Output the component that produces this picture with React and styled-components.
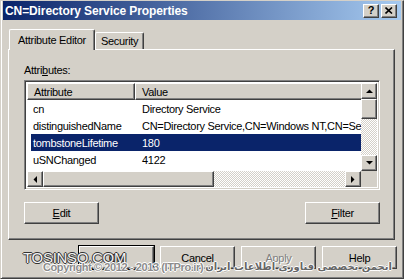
import React from 'react';
import styled, { createGlobalStyle, css } from 'styled-components';

const GlobalStyle = createGlobalStyle`
  html, body {
    margin: 0;
    padding: 0;
    background: #d4d0c8;
  }
  body {
    font-family: "Liberation Sans", Arial, sans-serif;
    font-size: 11px;
    letter-spacing: -0.3px;
    color: #000;
  }
  * {
    box-sizing: border-box;
  }
`;

const raised = css`
  border: 1px solid;
  border-color: #fff #404040 #404040 #fff;
  box-shadow: inset -1px -1px #808080;
  background: #d4d0c8;
`;

const dither = css`
  background-color: #fff;
  background-image: repeating-conic-gradient(#d4d0c8 0 25%, #fff 0 50%);
  background-size: 2px 2px;
`;

const Window = styled.div`
  position: relative;
  width: 404px;
  height: 279px;
  padding: 0 2px 2px 2px;
  background: #d4d0c8;
  border: 1px solid;
  border-color: #d4d0c8 #404040 #404040 #d4d0c8;
  box-shadow: inset 1px 0 #fff, inset -1px -1px #808080;
  display: flex;
  flex-direction: column;
  overflow: hidden;
`;

const TitleBar = styled.div`
  height: 19px;
  display: flex;
  align-items: center;
  padding: 0 4px 0 2px;
  background: linear-gradient(to right, #0a246a, #a6caf0);
`;

const Title = styled.div`
  flex: 1;
  color: #fff;
  font-weight: bold;
  font-size: 12px;
  letter-spacing: -0.1px;
`;

const TitleButton = styled.div`
  ${raised};
  width: 16px;
  height: 14px;
  margin-left: 2px;
  display: flex;
  align-items: center;
  justify-content: center;
  font-weight: bold;
  font-size: 11px;
  line-height: 1;
`;

const Body = styled.div`
  padding: 9px 6px 0 5px;
`;

const TabStrip = styled.div`
  display: flex;
  align-items: flex-end;
  padding-left: 1px;
  height: 20px;
  position: relative;
  z-index: 1;
`;

const Tab = styled.div`
  height: ${(p) => (p.$active ? 21 : 17)}px;
  margin-bottom: ${(p) => (p.$active ? -1 : 0)}px;
  padding: 0 ${(p) => (p.$active ? 8 : 5)}px;
  display: flex;
  align-items: center;
  background: #d4d0c8;
  border: 1px solid;
  border-bottom: none;
  border-color: #fff #404040 #404040 #fff;
  border-radius: 2px 2px 0 0;
  box-shadow: inset -1px 0 #808080;
  white-space: nowrap;
`;

const Panel = styled.div`
  ${raised};
  height: 191px;
  padding: 14px 14px 0 15px;
  display: flex;
  flex-direction: column;
`;

const Label = styled.div`
  height: 13px;
  line-height: 13px;
  margin-bottom: 3px;
`;

const Key = styled.span`
  text-decoration: underline;
`;

const ListBox = styled.div`
  height: 110px;
  border: 1px solid;
  border-color: #808080 #fff #fff #808080;
  box-shadow: inset 1px 1px #404040, inset -1px -1px #d4d0c8;
  padding: 2px;
  background: #fff;
  display: grid;
  grid-template-columns: 1fr 16px;
  grid-template-rows: 1fr 16px;
`;

const Viewport = styled.div`
  overflow: hidden;
  white-space: nowrap;
`;

const HeaderRow = styled.div`
  display: flex;
  height: 17px;
`;

const HeaderCell = styled.div`
  ${raised};
  flex: none;
  width: ${(p) => p.$width}px;
  padding-left: 6px;
  display: flex;
  align-items: center;
`;

const Row = styled.div`
  display: flex;
  align-items: center;
  height: 17px;
  margin-left: 4px;
  background: ${(p) => (p.$selected ? '#0a246a' : 'transparent')};
  color: ${(p) => (p.$selected ? '#fff' : '#000')};
`;

const NameCell = styled.div`
  flex: none;
  width: 104px;
  padding-left: 2px;
`;

const ValueCell = styled.div`
  flex: none;
  padding-left: 7px;
`;

const VScroll = styled.div`
  ${dither};
  display: flex;
  flex-direction: column;
`;

const HScroll = styled.div`
  ${dither};
  display: flex;
`;

const Track = styled.div`
  flex: 1;
`;

const ScrollButton = styled.div`
  ${raised};
  flex: none;
  width: 16px;
  height: 16px;
  display: flex;
  align-items: center;
  justify-content: center;
`;

const Thumb = styled.div`
  ${raised};
  flex: none;
  width: ${(p) => (p.$horizontal ? `${p.$length}px` : '16px')};
  height: ${(p) => (p.$horizontal ? '16px' : `${p.$length}px`)};
`;

const Corner = styled.div`
  background: #d4d0c8;
`;

const ButtonRow = styled.div`
  display: flex;
  justify-content: space-between;
  margin-top: 12px;
`;

const Button = styled.div`
  ${raised};
  width: 75px;
  height: ${(p) => p.$height || 23}px;
  display: flex;
  align-items: center;
  justify-content: center;
  color: ${(p) => (p.$disabled ? '#808080' : '#000')};
  text-shadow: ${(p) => (p.$disabled ? '1px 1px #fff' : 'none')};
  ${(p) =>
    p.$default &&
    css`
      outline: 1px solid #000;
      outline-offset: 0;
    `}
`;

const Footer = styled.div`
  display: flex;
  justify-content: flex-end;
  gap: 6px;
  padding: 6px 4px 0 0;
`;

const Watermark = styled.div`
  position: absolute;
  left: 22px;
  top: 249px;
  pointer-events: none;
`;

const Brand = styled.div`
  font-size: 15px;
  line-height: 15px;
  color: #f2f2f2;
  letter-spacing: -0.3px;
  text-shadow: 1px 0 #333, -1px 0 #333, 0 1px #333, 0 -1px #333;
`;

const Copyright = styled.div`
  margin: -4px 0 0 20px;
  display: flex;
  align-items: center;
  gap: 2px;
  font-size: 11px;
  font-weight: bold;
  line-height: 12px;
  letter-spacing: -0.4px;
  color: #8c8c8c;
  white-space: nowrap;
  text-shadow: 1px 0 #fff, -1px 0 #fff, 0 1px #fff, 0 -1px #fff;
`;

const Persian = styled.span`
  font-family: "DejaVu Sans", sans-serif;
  font-size: 10px;
  letter-spacing: 0;
  color: #666;
`;

const Arrow = ({ dir }) => {
  const shapes = {
    up: '0,4 7,4 3.5,0.5',
    down: '0,0 7,0 3.5,3.5',
    left: '4,0 4,7 0.5,3.5',
    right: '0,0 0,7 3.5,3.5',
  };
  const vertical = dir === 'up' || dir === 'down';
  return (
    <svg width={vertical ? 7 : 4} height={vertical ? 4 : 7} viewBox={vertical ? '0 0 7 4' : '0 0 4 7'}>
      <polygon points={shapes[dir]} fill="#000" />
    </svg>
  );
};

const attributes = [
  { name: 'cn', value: 'Directory Service' },
  { name: 'distinguishedName', value: 'CN=Directory Service,CN=Windows NT,CN=Services,CN=Configuration' },
  { name: 'tombstoneLifetime', value: '180', selected: true },
  { name: 'uSNChanged', value: '4122' },
  { name: 'uSNCreated', value: '4122' },
];

export default function App() {
  return (
    <>
      <GlobalStyle />
      <Window>
        <TitleBar>
          <Title>CN=Directory Service Properties</Title>
          <TitleButton>?</TitleButton>
          <TitleButton>
            <svg width="8" height="7" viewBox="0 0 8 7">
              <path d="M0.5 0.5 L7 6.5 M7 0.5 L0.5 6.5" stroke="#000" strokeWidth="1.6" />
            </svg>
          </TitleButton>
        </TitleBar>

        <Body>
          <TabStrip>
            <Tab $active>Attribute Editor</Tab>
            <Tab>Security</Tab>
          </TabStrip>
          <Panel>
            <Label>
              Attri<Key>b</Key>utes:
            </Label>
            <ListBox>
              <Viewport>
                <HeaderRow>
                  <HeaderCell $width={108}>Attribute</HeaderCell>
                  <HeaderCell $width={300}>Value</HeaderCell>
                </HeaderRow>
                {attributes.map((a) => (
                  <Row key={a.name} $selected={a.selected}>
                    <NameCell>{a.name}</NameCell>
                    <ValueCell>{a.value}</ValueCell>
                  </Row>
                ))}
              </Viewport>
              <VScroll>
                <ScrollButton>
                  <Arrow dir="up" />
                </ScrollButton>
                <Thumb $length={20} />
                <Track />
                <ScrollButton>
                  <Arrow dir="down" />
                </ScrollButton>
              </VScroll>
              <HScroll>
                <ScrollButton>
                  <Arrow dir="left" />
                </ScrollButton>
                <Thumb $horizontal $length={171} />
                <Track />
                <ScrollButton>
                  <Arrow dir="right" />
                </ScrollButton>
              </HScroll>
              <Corner />
            </ListBox>
            <ButtonRow>
              <Button $height={22}>
                <Key>E</Key>dit
              </Button>
              <Button $height={22}>
                <Key>F</Key>ilter
              </Button>
            </ButtonRow>
          </Panel>
        </Body>

        <Footer>
          <Button $default>OK</Button>
          <Button>Cancel</Button>
          <Button $disabled>Apply</Button>
          <Button>Help</Button>
        </Footer>

        <Watermark>
          <Brand>TOSINSO.COM</Brand>
          <Copyright>
            Copyright © 2012 - 2013 (ITPro.ir)
            <Persian>انجمن تخصصی فناوری اطلاعات ایران</Persian>
          </Copyright>
        </Watermark>
      </Window>
    </>
  );
}
